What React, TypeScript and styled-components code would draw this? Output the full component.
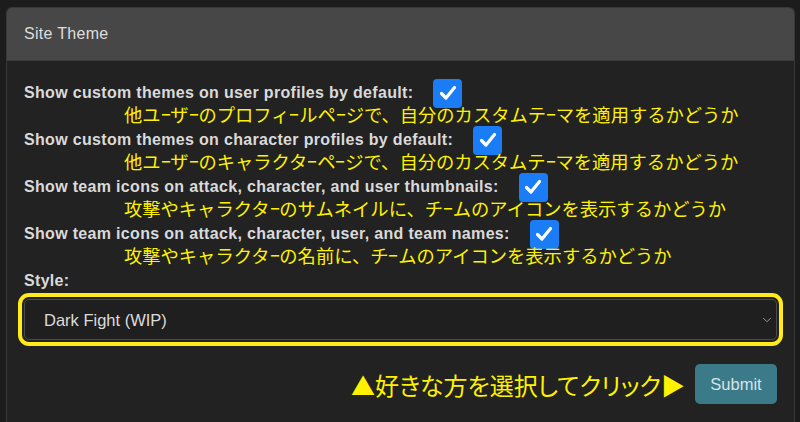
import React from "react";
import styled, { createGlobalStyle } from "styled-components";
import { ChevronDown } from "lucide-react";

const GlobalStyle = createGlobalStyle`
  html, body {
    margin: 0;
    padding: 0;
    background: #1c1c1c;
    width: 800px;
    height: 422px;
    overflow: hidden;
  }
  body {
    font-family: "Liberation Sans", Arial, sans-serif;
    color: #dcdcdc;
  }
`;

const Page = styled.div`
  padding: 7px 5px 0 6px;
`;

const Card = styled.section`
  background: #222222;
  border: 1px solid #383838;
  border-bottom: none;
  border-radius: 6px 6px 0 0;
  min-height: 430px;
  overflow: hidden;
`;

const CardHeader = styled.header`
  height: 52px;
  background: #474747;
  border-bottom: 1px solid #3a3a3a;
  display: flex;
  align-items: center;
  padding: 0 17px;
  font-size: 16px;
  letter-spacing: 0.3px;
  color: #dedede;
`;

const CardBody = styled.div`
  padding: 22px 17px 0 17px;
  display: flex;
  flex-direction: column;
`;

const Option = styled.div`
  display: flex;
  flex-direction: column;
  margin-bottom: 5px;
`;

const LabelLine = styled.label`
  height: 20px;
  display: flex;
  align-items: center;
  gap: 20px;
  font-weight: bold;
  font-size: 16px;
  letter-spacing: 0.32px;
  color: #dadada;
  white-space: nowrap;
`;

const Check = styled.span`
  width: 29px;
  height: 29px;
  margin: -5px 0;
  border-radius: 4px;
  background: #1a7df5;
  display: inline-flex;
  align-items: center;
  justify-content: center;
  flex: none;
`;

const Note = styled.div`
  height: 22px;
  display: flex;
  align-items: center;
  padding-left: 100px;
  font-family: "Noto Sans CJK JP", sans-serif;
  font-size: 18.3px;
  color: #fff200;
  white-space: nowrap;
`;

/* prolonged sound mark drawn at half width */
const Bar = styled.span`
  display: inline-block;
  flex: none;
  width: 9.8px;
  overflow: visible;
  & > span {
    display: inline-block;
    transform: scaleX(0.55);
    transform-origin: 0 50%;
  }
`;

const StyleLabel = styled.div`
  height: 20px;
  display: flex;
  align-items: center;
  font-weight: bold;
  font-size: 16px;
  letter-spacing: 0.32px;
  color: #dadada;
`;

const SelectWrap = styled.div`
  position: relative;
  margin-top: 8px;
`;

const Select = styled.select`
  appearance: none;
  display: block;
  width: 100%;
  height: 41px;
  padding: 0 19px;
  background: #1f1f1f;
  border: 1px solid #4a4a4a;
  border-radius: 5px;
  color: #dcdcdc;
  font-family: "Liberation Sans", Arial, sans-serif;
  font-size: 16.5px;
  outline: 4px solid #ffeb1a;
  outline-offset: 2px;
`;

const Chevron = styled(ChevronDown)`
  position: absolute;
  right: 3px;
  top: 14px;
  color: #a8a8a8;
  pointer-events: none;
`;

const Actions = styled.div`
  margin-top: 24px;
  display: flex;
  justify-content: flex-end;
  align-items: center;
  gap: 10px;
`;

const Hint = styled.span`
  font-family: "Noto Sans CJK JP", sans-serif;
  font-feature-settings: "palt";
  font-size: 24px;
  color: #fff200;
  white-space: nowrap;
`;

const SubmitButton = styled.button`
  width: 82px;
  height: 40px;
  border: none;
  border-radius: 5px;
  background: #3b7a89;
  color: #d6e3e8;
  font-family: "Liberation Sans", Arial, sans-serif;
  font-size: 16.5px;
`;

const CheckMark = () => (
  <svg width="20" height="20" viewBox="0 0 20 20">
    <path
      d="M3.5 10.5 L8 15 L16.5 4.5"
      fill="none"
      stroke="#fff"
      strokeWidth="3.2"
      strokeLinecap="round"
      strokeLinejoin="round"
    />
  </svg>
);

const NoteText = ({ text }: { text: string }) => {
  const parts = text.split("ー");
  return (
    <Note>
      {parts.map((p, i) => (
        <React.Fragment key={i}>
          {p}
          {i < parts.length - 1 && (
            <Bar>
              <span>ー</span>
            </Bar>
          )}
        </React.Fragment>
      ))}
    </Note>
  );
};

const options = [
  {
    label: "Show custom themes on user profiles by default:",
    note: "他ユーザーのプロフィールページで、自分のカスタムテーマを適用するかどうか",
  },
  {
    label: "Show custom themes on character profiles by default:",
    note: "他ユーザーのキャラクターページで、自分のカスタムテーマを適用するかどうか",
  },
  {
    label: "Show team icons on attack, character, and user thumbnails:",
    note: "攻撃やキャラクターのサムネイルに、チームのアイコンを表示するかどうか",
  },
  {
    label: "Show team icons on attack, character, user, and team names:",
    note: "攻撃やキャラクターの名前に、チームのアイコンを表示するかどうか",
  },
];

export default function App() {
  return (
    <>
      <GlobalStyle />
      <Page>
        <Card>
          <CardHeader>Site Theme</CardHeader>
          <CardBody>
            {options.map((o) => (
              <Option key={o.label}>
                <LabelLine>
                  {o.label}
                  <Check>
                    <CheckMark />
                  </Check>
                </LabelLine>
                <NoteText text={o.note} />
              </Option>
            ))}
            <StyleLabel>Style:</StyleLabel>
            <SelectWrap>
              <Select defaultValue="dark-fight">
                <option value="dark-fight">Dark Fight (WIP)</option>
              </Select>
              <Chevron size={14} strokeWidth={1.5} />
            </SelectWrap>
            <Actions>
              <Hint>▲好きな方を選択してクリック▶</Hint>
              <SubmitButton type="button">Submit</SubmitButton>
            </Actions>
          </CardBody>
        </Card>
      </Page>
    </>
  );
}
